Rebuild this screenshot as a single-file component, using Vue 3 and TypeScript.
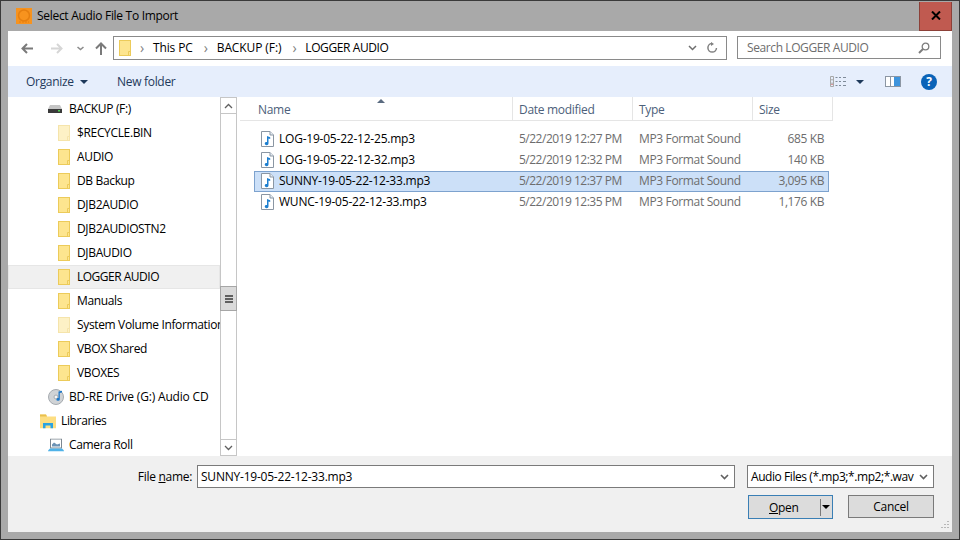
<script setup lang="ts">
const navItems = [
  { label: 'BACKUP (F:)', kind: 'drive', level: 1 },
  { label: '$RECYCLE.BIN', kind: 'hidden', level: 2 },
  { label: 'AUDIO', kind: 'folder', level: 2 },
  { label: 'DB Backup', kind: 'folder', level: 2 },
  { label: 'DJB2AUDIO', kind: 'folder', level: 2 },
  { label: 'DJB2AUDIOSTN2', kind: 'folder', level: 2 },
  { label: 'DJBAUDIO', kind: 'folder', level: 2 },
  { label: 'LOGGER AUDIO', kind: 'folder', level: 2, active: true },
  { label: 'Manuals', kind: 'folder', level: 2 },
  { label: 'System Volume Information', kind: 'hidden', level: 2 },
  { label: 'VBOX Shared', kind: 'folder', level: 2 },
  { label: 'VBOXES', kind: 'folder', level: 2 },
  { label: 'BD-RE Drive (G:) Audio CD', kind: 'cd', level: 1 },
  { label: 'Libraries', kind: 'library', level: 0 },
  { label: 'Camera Roll', kind: 'camera', level: 1 },
];

const files = [
  { name: 'LOG-19-05-22-12-25.mp3', date: '5/22/2019 12:27 PM', size: '685 KB' },
  { name: 'LOG-19-05-22-12-32.mp3', date: '5/22/2019 12:32 PM', size: '140 KB' },
  { name: 'SUNNY-19-05-22-12-33.mp3', date: '5/22/2019 12:37 PM', size: '3,095 KB', selected: true },
  { name: 'WUNC-19-05-22-12-33.mp3', date: '5/22/2019 12:35 PM', size: '1,176 KB' },
];
</script>

<template>
  <div class="window">
    <header class="titlebar">
      <svg class="app-icon" width="16" height="16" viewBox="0 0 16 16">
        <rect width="16" height="16" fill="#f7931e" />
        <circle cx="8" cy="7.5" r="5.5" fill="none" stroke="#e57f10" stroke-width="1.5" />
        <path d="M3 14h10" stroke="#e57f10" stroke-dasharray="2 1" />
      </svg>
      <span class="title">Select Audio File To Import</span>
      <button class="close">
        <svg width="10" height="9" viewBox="0 0 10 9">
          <path d="M1 0.5L9 8.5M9 0.5L1 8.5" stroke="#000" stroke-width="2" />
        </svg>
      </button>
    </header>

    <div class="client">
      <div class="navbar">
        <div class="nav-buttons">
          <svg class="nav-back" width="12" height="11" viewBox="0 0 12 11"><path d="M12 5.500H2M6 1L1.500 5.500 6 10" fill="none" stroke="#7a7a7a" stroke-width="2" /></svg>
          <svg class="nav-forward" width="12" height="11" viewBox="0 0 12 11"><path d="M0 5.500h10M6 1l4.500 4.500L6 10" fill="none" stroke="#d6d6d6" stroke-width="2" /></svg>
          <svg class="nav-recent" width="7" height="5" viewBox="0 0 7 5"><path d="M.5 1l3 2.500 3-2.500" fill="none" stroke="#8c8c8c" stroke-width="1.600" /></svg>
          <svg class="nav-up" width="12" height="13" viewBox="0 0 12 13"><path d="M6 13V2M1 6.500l5-5 5 5" fill="none" stroke="#7a7a7a" stroke-width="2" /></svg>
        </div>
        <div class="address">
          <svg class="folder addr-folder" width="12" height="16" viewBox="0 0 12 16">
            <rect x="0.500" y="0.500" width="11" height="15" fill="#fde58f" stroke="#eccb5a" />
            <path d="M9.500 15.500v-4h2" fill="none" stroke="#eccb5a" />
          </svg>
          <span class="crumb-sep">›</span><span class="crumb">This PC</span>
          <span class="crumb-sep">›</span><span class="crumb">BACKUP (F:)</span>
          <span class="crumb-sep">›</span><span class="crumb crumb-last">LOGGER AUDIO</span>
          <svg class="addr-chevron" width="9" height="6" viewBox="0 0 9 6"><path d="M1 1l3.500 3.500L8 1" fill="none" stroke="#6e6e6e" stroke-width="1.500" /></svg>
          <svg class="addr-refresh" width="11" height="12" viewBox="0 0 11 12"><path d="M5 1.500h-.2A4.300 4.300 0 1 0 9.500 6" fill="none" stroke="#808080" stroke-width="1.500" /><path d="M4 0v4l3-2z" fill="#808080" /></svg>
        </div>
        <div class="search">
          <span>Search LOGGER AUDIO</span>
          <svg width="12" height="12" viewBox="0 0 12 12"><circle cx="7.500" cy="4.500" r="3.300" fill="none" stroke="#7d7d7d" stroke-width="1.300" /><path d="M5 7l-4 4" stroke="#7d7d7d" stroke-width="2" /></svg>
        </div>
      </div>

      <div class="toolbar">
        <span class="tool organize">Organize<i class="caret"></i></span>
        <span class="tool">New folder</span>
        <div class="tool-icons">
          <svg width="16" height="11" viewBox="0 0 16 11">
            <path d="M0.500 0.500h3v10h-3zM0.500 3.800h3M0.500 7.200h3" fill="none" stroke="#a8a8a8" />
            <path d="M5.500 1.500h2M9 1.500h2M13 1.500h3M5.500 5.500h2M9 5.500h2M13 5.500h3M5.500 9.500h2M9 9.500h2M13 9.500h3" stroke="#7f8b99" />
            <rect x="1.500" y="8" width="1" height="1" fill="#d04040" />
          </svg>
          <i class="caret dark"></i>
          <svg class="preview" width="16" height="11" viewBox="0 0 16 11">
            <rect x="0.500" y="0.500" width="15" height="10" fill="#fff" stroke="#8c96a3" />
            <rect x="9" y="1" width="6" height="9" fill="#3e94dd" />
            <path d="M5.500 1v9" stroke="#8c96a3" />
          </svg>
          <span class="help">?</span>
        </div>
      </div>

      <div class="main">
        <nav class="tree">
          <div
            v-for="item in navItems"
            :key="item.label"
            :class="['tree-row', `level-${item.level}`, { 'tree-row--active': item.active }]"
          >
            <svg v-if="item.kind === 'folder' || item.kind === 'hidden'" :class="['tree-icon', { 'is-hidden': item.kind === 'hidden' }]" width="12" height="16" viewBox="0 0 12 16">
              <rect x="0.500" y="0.500" width="11" height="15" fill="#fde58f" stroke="#eccb5a" />
              <path d="M9.500 15.500v-4h2" fill="none" stroke="#eccb5a" />
            </svg>
            <svg v-else-if="item.kind === 'drive'" class="tree-icon" width="14" height="8" viewBox="0 0 14 8">
              <path d="M2 0h10l2 4H0z" fill="#c5c5c5" />
              <rect y="4" width="14" height="4" fill="#3a3a3a" />
              <rect x="10" y="5" width="2" height="1.500" fill="#50d050" />
            </svg>
            <svg v-else-if="item.kind === 'cd'" class="tree-icon" width="16" height="16" viewBox="0 0 16 16">
              <circle cx="8" cy="8" r="7.500" fill="#d0d3d6" stroke="#a6abb0" />
              <circle cx="8" cy="8" r="2" fill="#f6f6f6" stroke="#a6abb0" />
              <path d="M10.500 10.500V2.500l3.500-.8v1.800l-2.200.6v6.400a1.700 1.400 0 1 1-1.300-1.400z" fill="#1e78c8" />
            </svg>
            <svg v-else-if="item.kind === 'library'" class="tree-icon" width="16" height="15" viewBox="0 0 16 15">
              <path d="M0 1h6l1 2h9v12H0z" fill="#fdde82" />
              <path d="M0 1h6l1 2H0z" fill="#e9c04e" />
              <path d="M3 15V9.500h10V15h-2.500v-3h-5v3z" fill="#2aa3e2" />
            </svg>
            <svg v-else class="tree-icon" width="16" height="13" viewBox="0 0 16 13">
              <rect x="2.500" y="0.500" width="11" height="9" fill="#fff" stroke="#7c8791" />
              <path d="M4 6l2-2 3 2 3-1v3H4z" fill="#6d93b5" />
              <path d="M0 12l2-2h12l2 2v1H0z" fill="#4fb2e8" />
            </svg>
            <span :class="['tree-label', { 'tree-label--tight': item.label === 'LOGGER AUDIO', 'tree-label--wide': item.kind === 'cd' }]">{{ item.label }}</span>
          </div>
        </nav>

        <div class="scrollbar">
          <span class="scroll-btn">
            <svg width="9" height="6" viewBox="0 0 9 6"><path d="M1 5l3.500-3.500L8 5" fill="none" stroke="#606060" stroke-width="1.300" /></svg>
          </span>
          <div class="scroll-track">
            <span class="scroll-thumb"><i></i><i></i><i></i></span>
          </div>
          <span class="scroll-btn">
            <svg width="9" height="6" viewBox="0 0 9 6"><path d="M1 1l3.500 3.500L8 1" fill="none" stroke="#606060" stroke-width="1.300" /></svg>
          </span>
        </div>

        <section class="files">
          <div class="file-head">
            <span class="col col-name">Name<i class="sort"></i></span>
            <span class="col col-date">Date modified</span>
            <span class="col col-type">Type</span>
            <span class="col col-size">Size</span>
          </div>
          <div class="file-list">
            <div v-for="file in files" :key="file.name" :class="['file-row', { 'file-row--selected': file.selected }]">
              <span class="file-name">
                <svg class="file-icon" width="13" height="16" viewBox="0 0 13 16">
                  <path d="M0.500 0.500h8.500l3.500 3.500v11.500h-12z" fill="#fff" stroke="#8a96a3" />
                  <path d="M9 0.500v3.500h3.500" fill="#e6edf5" stroke="#8a96a3" />
                  <path d="M6 12.500V5l3.200 1.200v1.800l-1.700-.6v5.200a1.900 1.600 0 1 1-1.500-1.600z" fill="#1d7fd0" />
                </svg>
                <span class="cell-text">{{ file.name }}</span>
              </span>
              <span class="file-date cell-text">{{ file.date }}</span>
              <span class="file-type cell-text">MP3 Format Sound</span>
              <span class="file-size cell-text">{{ file.size }}</span>
            </div>
          </div>
        </section>
      </div>

      <footer class="bottom">
        <div class="bottom-row">
          <label class="name-label">File <u>n</u>ame:</label>
          <div class="combo name-combo">
            <span>SUNNY-19-05-22-12-33.mp3</span>
            <svg width="9" height="6" viewBox="0 0 9 6"><path d="M1 1l3.500 3.500L8 1" fill="none" stroke="#606060" stroke-width="1.600" /></svg>
          </div>
          <div class="combo filter-combo">
            <span>Audio Files (*.mp3;*.mp2;*.wav</span>
            <svg width="9" height="6" viewBox="0 0 9 6"><path d="M1 1l3.500 3.500L8 1" fill="none" stroke="#606060" stroke-width="1.600" /></svg>
          </div>
        </div>
        <div class="button-row">
          <button class="btn btn-open"><span class="open-text"><u>O</u>pen</span><i class="split"></i><i class="split-caret"></i></button>
          <button class="btn btn-cancel">Cancel</button>
        </div>
        <svg class="grip" width="10" height="10" viewBox="0 0 10 10">
          <path d="M7 1h2v1H7zM4 4h2v1H4zM7 4h2v1H7zM1 7h2v1H1zM4 7h2v1H4zM7 7h2v1H7z" fill="#b8b8b8" />
        </svg>
      </footer>
    </div>
  </div>
</template>

<style>
html, body { margin: 0; background: #a9a9a9; }
</style>

<style scoped>
.window {
  box-sizing: border-box;
  width: 960px;
  height: 540px;
  display: flex;
  flex-direction: column;
  overflow: hidden;
  padding: 0 7px 7px;
  border: 1px solid #3a3a3a;
  background: #a9a9a9;
  color: #000;
  font: 12px "Open Sans", "Noto Sans", sans-serif;
  letter-spacing: -0.3px;
}

.titlebar {
  flex: none;
  display: flex;
  align-items: center;
  height: 30px;
  margin-left: 8px;
  margin-right: 0;
}

.app-icon { margin-right: 5px; }
.title { flex: 1; padding-bottom: 2px; }

.close {
  width: 33px;
  height: 29px;
  display: flex;
  align-items: center;
  justify-content: center;
  padding: 0;
  border: 1px solid #8c4038;
  border-top: none;
  background: #c05a50;
}

.client {
  flex: 1;
  min-height: 0;
  display: flex;
  flex-direction: column;
  background: #fff;
}

.navbar {
  flex: none;
  display: flex;
  align-items: flex-start;
  height: 35px;
  padding-top: 5px;
  box-sizing: border-box;
}

.nav-buttons {
  display: flex;
  align-items: center;
  width: 105px;
  height: 24px;
  padding-left: 13px;
  box-sizing: border-box;
}

.nav-forward { margin-left: 18px; }
.nav-recent { margin-left: 14px; }
.nav-up { margin-left: 11px; }

.address {
  box-sizing: border-box;
  width: 614px;
  height: 24px;
  display: flex;
  align-items: center;
  border: 1px solid #8a8a8a;
  padding: 0 8px 0 5px;
  font-size: 12px;
}

.addr-folder { margin-right: 9px; }
.crumb-sep { color: #808080; font-size: 14px; margin: 0 9px 2px 0; }
.crumb { margin-right: 11px; padding-bottom: 2px; letter-spacing: -0.1px; }
.crumb-last { letter-spacing: -0.4px; }
.addr-chevron { margin-left: auto; margin-right: 10px; }

.search {
  box-sizing: border-box;
  width: 204px;
  height: 23px;
  margin-left: 10px;
  display: flex;
  align-items: center;
  justify-content: space-between;
  border: 1px solid #8a8a8a;
  padding: 0 10px 0 9px;
  color: #6d6d6d;
  letter-spacing: -0.4px;
}

.toolbar {
  flex: none;
  display: flex;
  align-items: center;
  height: 31px;
  padding-left: 18px;
  background: #e6eefc;
  color: #1e395b;
}

.tool { padding-bottom: 1px; }
.tool.organize { width: 91px; }

.caret {
  display: inline-block;
  margin-left: 6px;
  vertical-align: 2px;
  border: 4px solid transparent;
  border-top: 4px solid #1e395b;
  border-bottom: none;
}

.tool-icons {
  margin-left: auto;
  display: flex;
  align-items: center;
  padding-right: 15px;
}

.caret.dark { margin-left: 10px; }
.preview { margin-left: 21px; }

.help {
  width: 16px;
  height: 16px;
  margin-left: 20px;
  border-radius: 50%;
  background: #0a63b8;
  color: #fff;
  font: bold 12px/16px "Open Sans", sans-serif;
  text-align: center;
}

.main {
  flex: 1;
  min-height: 0;
  display: flex;
  overflow: hidden;
}

.tree {
  flex: none;
  width: 212px;
  overflow: hidden;
}

.tree-row {
  box-sizing: border-box;
  position: relative;
  height: 24px;
  display: flex;
  align-items: center;
  white-space: nowrap;
  overflow: hidden;
  letter-spacing: -0.35px;
}

.tree-row--active {
  background: #f0f0f0;
  box-shadow: inset 0 0 0 1px #e6e6e6;
}

.tree-icon { position: absolute; top: 50%; transform: translateY(-50%); }
.tree-label { display: block; padding-bottom: 2px; }
.tree-label--tight { letter-spacing: -0.5px; }
.tree-label--wide { letter-spacing: -0.18px; }

.level-0 { padding-left: 53px; }
.level-1 { padding-left: 61px; }
.level-2 { padding-left: 69px; }
.level-0 .tree-icon { left: 32px; }
.level-1 .tree-icon { left: 40px; }
.level-2 .tree-icon { left: 50px; }

.is-hidden { opacity: 0.5; }

.scrollbar {
  flex: none;
  box-sizing: border-box;
  width: 17px;
  display: flex;
  flex-direction: column;
  border-left: 1px solid #c6c6c6;
  border-right: 1px solid #c6c6c6;
}

.scroll-btn {
  flex: none;
  height: 17px;
  display: flex;
  align-items: center;
  justify-content: center;
  border-top: 1px solid #c6c6c6;
  border-bottom: 1px solid #c6c6c6;
  box-sizing: border-box;
}

.scroll-track {
  flex: 1;
  display: flex;
  flex-direction: column;
  padding-top: 172px;
}

.scroll-thumb {
  box-sizing: border-box;
  height: 25px;
  display: flex;
  flex-direction: column;
  align-items: center;
  justify-content: center;
  gap: 1px;
  margin: 0 -1px;
  border: 1px solid #a6a6a6;
  background: #dadada;
}

.scroll-thumb i {
  width: 8px;
  height: 2px;
  background: #606060;
}

.files {
  flex: 1;
  min-width: 0;
  margin-left: 3px;
  color: #000;
}

.file-head {
  box-sizing: border-box;
  display: flex;
  width: 593px;
  height: 24px;
  border-bottom: 1px solid #e5e5e5;
  color: #4c607a;
  background: #fff;
}

.col {
  box-sizing: border-box;
  position: relative;
  display: flex;
  align-items: center;
  padding-top: 2px;
  padding-left: 6px;
  border-right: 1px solid #e5e5e5;
}

.col-name { width: 273px; padding-left: 18px; }
.col-date { width: 120px; }
.col-type { width: 120px; }
.col-size { width: 80px; }

.sort {
  position: absolute;
  left: 137px;
  top: 2px;
  border: 4px solid transparent;
  border-bottom: 4px solid #5a6b80;
  border-top: none;
}

.file-list {
  padding: 7.500px 0 0 14px;
}

.file-row {
  box-sizing: border-box;
  display: flex;
  align-items: center;
  width: 575px;
  height: 21px;
  border: 1px solid transparent;
  color: #6d6d6d;
}

.cell-text { padding-bottom: 2px; }

.file-row--selected {
  background: #cce0f8;
  border-color: #7da2ce;
}

.file-name {
  display: flex;
  align-items: center;
  width: 264px;
  padding-left: 6px;
  box-sizing: border-box;
  color: #000;
  letter-spacing: -0.22px;
}

.file-icon { margin-right: 5px; }
.file-date { width: 120px; letter-spacing: -0.5px; }
.file-type { width: 120px; letter-spacing: -0.35px; }
.file-size { width: 65px; text-align: right; letter-spacing: -0.4px; }

.bottom {
  flex: none;
  position: relative;
  box-sizing: border-box;
  height: 76px;
  background: #f0f0f0;
  padding-top: 9px;
}

.bottom-row {
  display: flex;
  align-items: center;
}

.name-label {
  width: 189px;
  padding-right: 5px;
  box-sizing: border-box;
  text-align: right;
}

.combo {
  box-sizing: border-box;
  height: 23px;
  display: flex;
  align-items: center;
  justify-content: space-between;
  border: 1px solid #7a7a7a;
  padding: 0 5px 0 3px;
  background: #fff;
  white-space: nowrap;
  overflow: hidden;
}

.name-combo { width: 538px; letter-spacing: -0.22px; }
.filter-combo { width: 187px; margin-left: 12px; letter-spacing: -0.43px; }

.button-row {
  display: flex;
  gap: 15px;
  justify-content: flex-end;
  margin-top: 7px;
  padding-right: 18px;
}

.btn {
  box-sizing: border-box;
  height: 24px;
  padding: 0;
  border: 1px solid #7a7a7a;
  background: #dcdcdc;
  font: inherit;
  letter-spacing: inherit;
  color: #000;
}

.btn-open {
  position: relative;
  width: 85px;
  display: flex;
  align-items: center;
  border-color: #3a7fb5;
}

.open-text { margin-left: 20px; }

.split {
  position: absolute;
  left: 71px;
  top: 3px;
  width: 1px;
  height: 17px;
  background: #7a7a7a;
}

.split-caret {
  position: absolute;
  left: 73px;
  top: 9px;
  border: 4px solid transparent;
  border-top: 4px solid #000;
  border-bottom: none;
}

.btn-cancel { width: 86px; height: 23px; }

.grip {
  position: absolute;
  right: 2px;
  bottom: 2px;
}
</style>
